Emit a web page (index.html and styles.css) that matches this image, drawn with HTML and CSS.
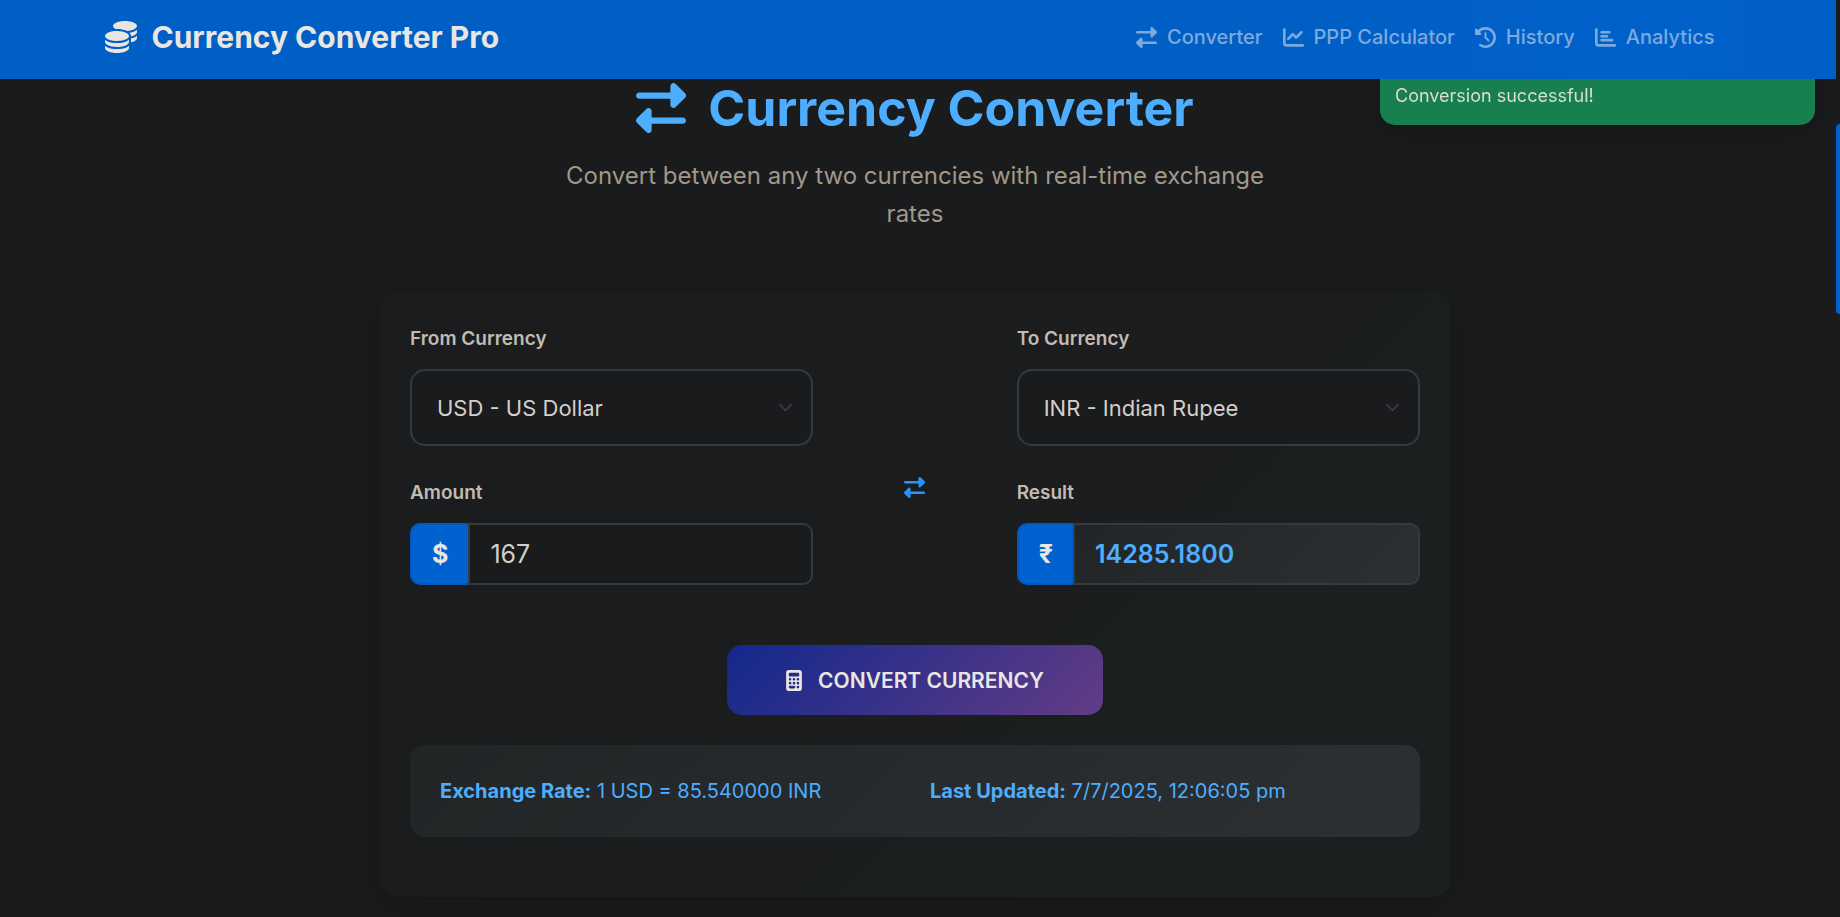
FILE: index.html
```html
<!DOCTYPE html>
<html lang="en">
<head>
<meta charset="utf-8">
<meta name="viewport" content="width=device-width, initial-scale=1">
<title>Currency Converter Pro</title>
<link rel="stylesheet" href="styles.css">
</head>
<body>
<svg class="sprite" aria-hidden="true">
  <symbol id="i-swap" viewBox="0 0 512 512"><path d="M32 96l320 0V32c0-12.900 7.800-24.600 19.800-29.600s25.700-2.200 34.900 6.900l96 96c6 6 9.400 14.100 9.400 22.600s-3.400 16.600-9.400 22.600l-96 96c-9.200 9.200-22.900 11.900-34.900 6.900s-19.800-16.600-19.800-29.600V160L32 160c-17.700 0-32-14.300-32-32s14.300-32 32-32zM480 352c17.700 0 32 14.300 32 32s-14.300 32-32 32H160v64c0 12.900-7.800 24.600-19.800 29.600s-25.700 2.200-34.900-6.900l-96-96c-6-6-9.400-14.100-9.400-22.600s3.400-16.600 9.400-22.600l96-96c9.200-9.200 22.900-11.900 34.900-6.900s19.800 16.600 19.800 29.600l0 64H480z"/></symbol>
  <symbol id="i-line" viewBox="0 0 512 512"><path d="M64 64c0-17.700-14.300-32-32-32S0 46.300 0 64V400c0 44.200 35.800 80 80 80H480c17.700 0 32-14.300 32-32s-14.300-32-32-32H80c-8.800 0-16-7.200-16-16V64zm406.600 86.600c12.500-12.500 12.500-32.800 0-45.300s-32.800-12.500-45.300 0L320 210.700l-57.400-57.400c-12.500-12.500-32.800-12.500-45.300 0l-112 112c-12.500 12.500-12.500 32.800 0 45.300s32.800 12.500 45.300 0L240 221.300l57.400 57.400c12.500 12.500 32.800 12.500 45.300 0l128-128z"/></symbol>
  <symbol id="i-history" viewBox="0 0 512 512"><path d="M75 75L41 41C25.900 25.900 0 36.600 0 57.900V168c0 13.300 10.700 24 24 24H134.100c21.400 0 32.100-25.900 17-41l-30.800-30.800C155 85.500 203 64 256 64c106 0 192 86 192 192s-86 192-192 192c-40.800 0-78.600-12.700-109.700-34.400c-14.500-10.100-34.400-6.600-44.600 7.900s-6.600 34.400 7.900 44.600C151.200 495 201.700 512 256 512c141.400 0 256-114.600 256-256S397.400 0 256 0C185.300 0 121.300 28.700 75 75zm181 53c-13.300 0-24 10.700-24 24V256c0 6.400 2.500 12.500 7 17l72 72c9.400 9.400 24.600 9.400 33.900 0s9.400-24.600 0-33.900l-65-65V152c0-13.300-10.700-24-24-24z"/></symbol>
  <symbol id="i-bar" viewBox="0 0 512 512"><path d="M32 32c17.700 0 32 14.300 32 32V400c0 8.800 7.200 16 16 16H480c17.700 0 32 14.300 32 32s-14.300 32-32 32H80c-44.200 0-80-35.800-80-80V64C0 46.300 14.300 32 32 32zm96 96c0-17.700 14.300-32 32-32l192 0c17.700 0 32 14.300 32 32s-14.300 32-32 32H160c-17.700 0-32-14.300-32-32zm32 64H288c17.700 0 32 14.300 32 32s-14.300 32-32 32H160c-17.700 0-32-14.300-32-32s14.300-32 32-32zm0 96H416c17.700 0 32 14.300 32 32s-14.300 32-32 32H160c-17.700 0-32-14.300-32-32s14.300-32 32-32z"/></symbol>
  <symbol id="i-coins" viewBox="0 0 512 512"><path d="M512 80c0 18-14.300 34.600-38.400 48c-29.100 16.100-72.500 27.500-122.300 30.900c-3.700-1.800-7.400-3.500-11.300-5C300.600 137.400 248.200 128 192 128c-8.300 0-16.400 .2-24.500 .6l-1.100-.6C142.300 114.600 128 98 128 80c0-44.200 86-80 192-80S512 35.800 512 80zM160.700 161.100c10.200-.7 20.700-1.100 31.300-1.100c62.200 0 117.400 12.300 152.500 31.400C369.300 204.900 384 221.700 384 240c0 4-.7 7.900-2.100 11.700c-4.600 13.200-17 25.300-35 35.500c-.1 .1-.3 .1-.4 .2c-.3 .2-.6 .3-.9 .5c-35 19.400-90.800 32-153.600 32c-59.600 0-112.900-11.300-148.200-29.100c-1.900-.9-3.700-1.900-5.500-2.900C14.300 274.600 0 258 0 240c0-34.800 53.400-64.500 128-75.400c10.500-1.500 21.400-2.700 32.700-3.500zM416 240c0-21.900-10.600-39.900-24.100-53.400c28.300-4.400 54.200-11.400 76.200-20.500c16.300-6.800 31.500-15.200 43.900-25.500V176c0 19.300-16.500 37.100-43.800 50.900c-14.600 7.400-32.400 13.700-52.400 18.500c.1-1.800 .2-3.500 .2-5.300zm-32 96c0 18-14.300 34.600-38.400 48c-1.800 1-3.600 1.900-5.500 2.900C304.900 404.700 251.600 416 192 416c-62.800 0-118.600-12.600-153.600-32C14.300 370.600 0 354 0 336V300.600c12.500 10.300 27.600 18.700 43.900 25.500C83.400 342.600 135.800 352 192 352s108.600-9.400 148.100-25.900c7.800-3.200 15.300-6.900 22.400-10.900c6.100-3.400 11.800-7.200 17.200-11.200c1.500-1.100 2.900-2.300 4.300-3.400V336zm32 0V278.100c19-4.200 36.500-9.500 52.100-16c16.300-6.800 31.500-15.200 43.900-25.500V272c0 10.500-5 21-14.900 30.900c-16.300 16.300-45 29.700-81.300 38.400c.1-1.700 .2-3.500 .2-5.300zM192 448c56.200 0 108.600-9.400 148.100-25.900c16.300-6.800 31.500-15.200 43.900-25.500V432c0 44.200-86 80-192 80S0 476.200 0 432V396.600c12.500 10.300 27.600 18.700 43.900 25.500C83.400 438.600 135.800 448 192 448z"/></symbol>
  <symbol id="i-calc" viewBox="0 0 384 512"><path d="M64 0C28.700 0 0 28.700 0 64V448c0 35.300 28.700 64 64 64H320c35.300 0 64-28.700 64-64V64c0-35.300-28.700-64-64-64H64zM96 64H288c17.700 0 32 14.300 32 32v32c0 17.700-14.300 32-32 32H96c-17.700 0-32-14.300-32-32V96c0-17.700 14.300-32 32-32zm32 160a32 32 0 1 1 -64 0 32 32 0 1 1 64 0zM96 352a32 32 0 1 1 0-64 32 32 0 1 1 0 64zM64 416c0-17.700 14.300-32 32-32h96c17.700 0 32 14.300 32 32s-14.300 32-32 32H96c-17.700 0-32-14.300-32-32zM192 256a32 32 0 1 1 0-64 32 32 0 1 1 0 64zm32 64a32 32 0 1 1 -64 0 32 32 0 1 1 64 0zm64-64a32 32 0 1 1 0-64 32 32 0 1 1 0 64zm32 64a32 32 0 1 1 -64 0 32 32 0 1 1 64 0zM288 448a32 32 0 1 1 0-64 32 32 0 1 1 0 64z"/></symbol>
  <symbol id="i-chevron" viewBox="0 0 16 16"><path d="M2 5l6 6 6-6" fill="none" stroke="currentColor" stroke-width="2" stroke-linecap="round" stroke-linejoin="round"/></symbol>
</svg>

<header class="navbar">
  <div class="container navbar-inner">
    <a class="brand" href="#"><svg class="brand-icon"><use href="#i-coins"/></svg>Currency Converter Pro</a>
    <nav class="nav">
      <a class="nav-link" href="#converter"><svg class="icon"><use href="#i-swap"/></svg>Converter</a>
      <a class="nav-link" href="#ppp"><svg class="icon"><use href="#i-line"/></svg>PPP Calculator</a>
      <a class="nav-link" href="#history"><svg class="icon"><use href="#i-history"/></svg>History</a>
      <a class="nav-link" href="#analytics"><svg class="icon"><use href="#i-bar"/></svg>Analytics</a>
    </nav>
  </div>
</header>

<div class="toast" role="status">Conversion successful!</div>

<main class="main" id="converter">
  <div class="container">
    <section class="hero">
      <h1 class="title"><svg class="title-icon"><use href="#i-swap"/></svg>Currency Converter</h1>
      <p class="subtitle">Convert between any two currencies with real-time exchange rates</p>
    </section>

    <form class="card">
      <div class="row">
        <div class="col">
          <div class="field">
            <label class="label" for="from">From Currency</label>
            <div class="select-wrap">
              <select class="select" id="from"><option>USD - US Dollar</option></select>
              <svg class="chevron"><use href="#i-chevron"/></svg>
            </div>
          </div>
          <div class="field">
            <label class="label" for="amount">Amount</label>
            <div class="group">
              <span class="symbol">$</span>
              <input class="input" id="amount" type="text" inputmode="decimal" value="167">
            </div>
          </div>
        </div>
        <div class="col col-swap">
          <button class="swap" type="button" aria-label="Swap currencies"><svg class="icon"><use href="#i-swap"/></svg></button>
        </div>
        <div class="col">
          <div class="field">
            <label class="label" for="to">To Currency</label>
            <div class="select-wrap">
              <select class="select" id="to"><option>INR - Indian Rupee</option></select>
              <svg class="chevron"><use href="#i-chevron"/></svg>
            </div>
          </div>
          <div class="field">
            <label class="label" for="result">Result</label>
            <div class="group">
              <span class="symbol">₹</span>
              <input class="input input-result" id="result" type="text" value="14285.1800" readonly>
            </div>
          </div>
        </div>
      </div>
      <button class="convert" type="button"><svg class="calc-icon"><use href="#i-calc"/></svg>CONVERT CURRENCY</button>
      <div class="info">
        <div><strong>Exchange Rate:</strong> 1 USD = 85.540000 INR</div>
        <div><strong>Last Updated:</strong> 7/7/2025, 12:06:05 pm</div>
      </div>
    </form>
  </div>
</main>
<div class="scroll-thumb"></div>
</body>
</html>
```

FILE: styles.css
```css
*, *::before, *::after { box-sizing: border-box; }

body {
  margin: 0;
  min-height: 100vh;
  overflow-x: hidden;
  background: #1a1b1d;
  color: #d3cfc9;
  font-family: Inter, "Liberation Sans", sans-serif;
  font-size: 20px;
  line-height: 30px;
}

svg { fill: currentColor; flex: none; }
.sprite { position: absolute; width: 0; height: 0; }
.icon { width: 21px; height: 21px; }

.container {
  width: 100%;
  max-width: 1650px;
  margin: 0 auto;
  padding: 0 15px;
}

.navbar {
  position: sticky;
  top: 0;
  z-index: 2;
  margin-right: 4px;
  padding: 12px 7px 17px 0;
  background: linear-gradient(90deg, #005fc4 70%, #0061cb 90%, #005fc6);
}
.navbar-inner { display: flex; align-items: center; justify-content: space-between; }

.brand {
  display: flex;
  align-items: center;
  gap: 15px;
  color: #e8e6e3;
  font-size: 30px;
  font-weight: 700;
  text-decoration: none;
}
.brand-icon { width: 32px; height: 32px; }

.nav { display: flex; }
.nav-link {
  display: flex;
  align-items: center;
  gap: 10px;
  padding: 10px;
  color: #7daade;
  font-weight: 500;
  text-decoration: none;
}

.toast {
  position: absolute;
  top: 25px;
  right: 25px;
  z-index: 1;
  width: 435px;
  padding: 56px 15px 14px;
  border-radius: 15px;
  background: #187f4e;
  color: #dedbd5;
  font-size: 18px;
  box-shadow: 0 8px 24px rgba(0, 0, 0, .2);
}

.main { padding-right: 10px; }

.hero { text-align: center; padding-bottom: 59px; }
.title {
  display: flex;
  align-items: center;
  justify-content: center;
  gap: 22px;
  margin: 0 0 20px;
  color: #4dadff;
  font-size: 50px;
  font-weight: 700;
  line-height: 58px;
}
.title-icon { width: 50px; height: 50px; }
.subtitle {
  max-width: 740px;
  margin: 0 auto;
  color: #a19889;
  font-size: 24px;
  line-height: 38px;
}

.card {
  max-width: 1070px;
  margin: 0 auto;
  padding: 32px 30px 60px;
  border-radius: 18px;
  background: linear-gradient(135deg, #1b1c1e, #1b1c1e 40%, #1b1f1f 75%, #1c1f20);
  box-shadow: 0 10px 40px rgba(0, 0, 0, .18);
}

.row { display: grid; grid-template-columns: 5fr 2fr 5fr; margin: 0 -15px 60px; }
.col { min-width: 0; padding: 0 15px; display: flex; flex-direction: column; gap: 32px; }
.col-swap { align-items: center; justify-content: center; padding-top: 66px; }
.label {
  display: block;
  margin-bottom: 15px;
  color: #c2bbb1;
  font-size: 19px;
  font-weight: 600;
}

.select-wrap { display: grid; align-items: center; }
.select-wrap > * { grid-area: 1 / 1; }
.select {
  width: 100%;
  height: 77px;
  padding: 0 25px;
  appearance: none;
  border: 2px solid #353a3c;
  border-radius: 15px;
  background: #1a1b1d;
  color: #d3cfc9;
  font-family: inherit;
  font-size: 22px;
}
.chevron {
  justify-self: end;
  width: 15px;
  height: 15px;
  margin-right: 20px;
  color: #3a3b41;
  pointer-events: none;
}

.group { display: flex; height: 62px; }
.symbol {
  display: flex;
  align-items: center;
  justify-content: center;
  padding: 0 20px;
  border: 2px solid #0059bb;
  border-right: 0;
  border-radius: 10px 0 0 10px;
  background: #0062d0;
  color: #e8e6e3;
  font-size: 25px;
  font-weight: 700;
}
.input {
  flex: 1;
  min-width: 0;
  padding: 0 20px;
  border: 2px solid #353a3c;
  border-radius: 0 10px 10px 0;
  background: #1a1b1d;
  color: #d3cfc9;
  font-family: inherit;
  font-size: 25px;
}
.input-result {
  background: linear-gradient(135deg, #212526, #2c3033);
  color: #4dadff;
  font-weight: 600;
}

.swap {
  padding: 10px;
  border: 0;
  background: none;
  color: #2693ff;
  line-height: 0;
}

.convert {
  display: flex;
  align-items: center;
  gap: 16px;
  height: 70px;
  margin: 0 auto 30px;
  padding: 0 59px;
  border: 0;
  border-radius: 15px;
  background: linear-gradient(135deg, #12288c, #633c85);
  color: #e8e6e3;
  font-family: inherit;
  font-size: 21px;
  font-weight: 600;
}
.calc-icon { width: 16px; height: 21px; }

.info {
  display: grid;
  grid-template-columns: 1fr 1fr;
  gap: 30px;
  padding: 31px 30px;
  border-radius: 15px;
  background: linear-gradient(135deg, #212526, #2c3033);
  color: #4dadff;
}
.info strong { font-weight: 700; }

.scroll-thumb {
  position: fixed;
  top: 124px;
  right: 0;
  width: 4px;
  height: 190px;
  border-radius: 4px 0 0 4px;
  background: #0062d0;
}
```
